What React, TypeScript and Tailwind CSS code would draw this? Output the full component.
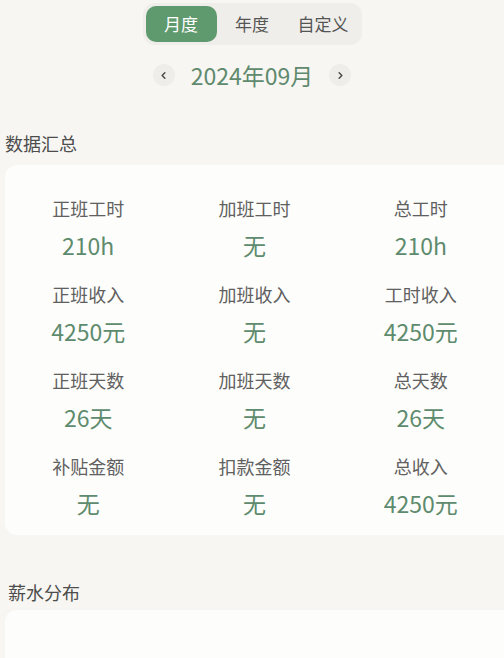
import { ChevronLeft, ChevronRight } from 'lucide-react';

const FONT = { fontFamily: '"Noto Sans CJK SC", "Noto Sans", sans-serif' };

const STATS = [
  { label: '正班工时', value: '210h' },
  { label: '加班工时', value: '无' },
  { label: '总工时', value: '210h' },
  { label: '正班收入', value: '4250元' },
  { label: '加班收入', value: '无' },
  { label: '工时收入', value: '4250元' },
  { label: '正班天数', value: '26天' },
  { label: '加班天数', value: '无' },
  { label: '总天数', value: '26天' },
  { label: '补贴金额', value: '无' },
  { label: '扣款金额', value: '无' },
  { label: '总收入', value: '4250元' },
];

const TABS = ['月度', '年度', '自定义'];

export default function App() {
  const active = 0;

  return (
    <div className="h-[658px] w-[504px] overflow-hidden bg-[#f7f6f2]" style={FONT}>
      <div className="flex justify-center pt-[3px]">
        <div className="flex rounded-[12px] bg-[#efeeea] p-[3px]">
          {TABS.map((tab, i) => (
            <button
              key={tab}
              className={`flex h-[36px] w-[71px] items-center justify-center rounded-[10px] text-[17px] ${
                i === active ? 'bg-[#5f9a6e] text-white' : 'text-[#555555]'
              }`}
            >
              {tab}
            </button>
          ))}
        </div>
      </div>

      <div className="mt-[18px] flex items-center justify-center">
        <button className="flex h-[22px] w-[22px] items-center justify-center rounded-full bg-[#eeede9] text-[#444444]">
          <ChevronLeft className="h-[11px] w-[11px]" strokeWidth={3} />
        </button>
        <span className="mx-[16px] text-[23px] leading-[24px] text-[#5f8a6e]">2024年09月</span>
        <button className="flex h-[22px] w-[22px] items-center justify-center rounded-full bg-[#eeede9] text-[#444444]">
          <ChevronRight className="h-[11px] w-[11px]" strokeWidth={3} />
        </button>
      </div>

      <h2 className="mt-[44px] pl-[5px] text-[18px] leading-[24px] text-[#4d4d4d]">数据汇总</h2>

      <div className="ml-[5px] mt-[10px] rounded-l-[12px] bg-[#fdfdfb] pb-[18px] pt-[31px]">
        <div className="grid grid-cols-3 gap-y-[23px]">
          {STATS.map((s) => (
            <div key={s.label} className="flex flex-col items-center">
              <span className="text-[18px] leading-[24px] text-[#606060]">{s.label}</span>
              <span className="mt-[11px] text-[23px] leading-[28px] text-[#5e8b6d]">
                {s.value}
              </span>
            </div>
          ))}
        </div>
      </div>

      <h2 className="mt-[45px] pl-[8px] text-[18px] leading-[24px] text-[#4d4d4d]">薪水分布</h2>

      <div className="ml-[5px] mt-[6px] h-[200px] rounded-l-[12px] bg-[#fdfdfb]" />
    </div>
  );
}
